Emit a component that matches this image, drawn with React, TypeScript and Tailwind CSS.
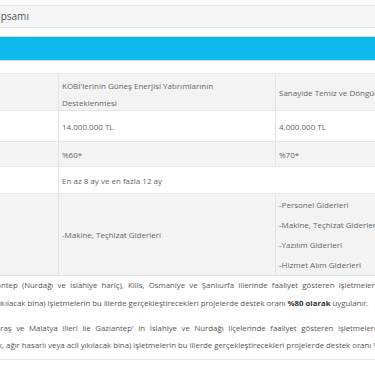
const rows = [
  { h: "h-[37px]", bg: "bg-[#f3f3f3]" },
  { h: "h-[31px]", bg: "bg-white" },
  { h: "h-[25px]", bg: "bg-[#f3f3f3]" },
  { h: "h-[27px]", bg: "bg-white" },
  { h: "h-[82px]", bg: "bg-[#f3f3f3]" },
];

const Cell = ({ children, last }: { children?: React.ReactNode; last?: boolean }) => (
  <div className={`flex items-center px-[3px] ${last ? "" : "border-r border-[#e4e4e4]"}`}>{children}</div>
);

export default function App() {
  return (
    <div className="w-[375px] h-[366px] overflow-hidden bg-white font-['Open_Sans',sans-serif] text-[8px] text-[#666]">
      <div className="pt-[5px]">
        {/* section title, cut on the left */}
        <div className="-ml-[11px] w-[400px] h-[23px] flex items-center border-y border-[#e8e8e8] bg-[#f4f5f7] text-[10px] text-[#555]">
          Kapsamı
        </div>

        <div className="mt-[8px] h-[25px] w-full border-y border-[#b5e9f9] bg-[#0db9ec]" />

        <div className="mt-[12px] border-b border-[#e4e4e4] leading-[17px]">
          <div className={`grid grid-cols-[59px_217px_1fr] border-t border-[#e4e4e4] ${rows[0].h} ${rows[0].bg}`}>
            <Cell />
            <div className="border-r border-[#e4e4e4] px-[3px] pt-[2.5px]">
              KOBİ'lerinin Güneş Enerjisi Yatırımlarının
              <br />
              Desteklenmesi
            </div>
            <Cell last>
              <span className="whitespace-nowrap">Sanayide Temiz ve Döngüsel Ekonomi Uygulamaları</span>
            </Cell>
          </div>

          <div className={`grid grid-cols-[59px_217px_1fr] border-t border-[#e4e4e4] ${rows[1].h} ${rows[1].bg}`}>
            <Cell />
            <Cell>14.000.000 TL</Cell>
            <Cell last>4.000.000 TL</Cell>
          </div>

          <div className={`grid grid-cols-[59px_217px_1fr] border-t border-[#e4e4e4] ${rows[2].h} ${rows[2].bg}`}>
            <Cell />
            <Cell>%60*</Cell>
            <Cell last>%70*</Cell>
          </div>

          <div className={`grid grid-cols-[59px_1fr] border-t border-[#e4e4e4] ${rows[3].h} ${rows[3].bg}`}>
            <Cell />
            <Cell last>En az 8 ay ve en fazla 12 ay</Cell>
          </div>

          <div className={`grid grid-cols-[59px_217px_1fr] border-t border-[#e4e4e4] ${rows[4].h} ${rows[4].bg}`}>
            <Cell />
            <Cell>-Makine, Teçhizat Giderleri</Cell>
            <div className="px-[3px] pt-px leading-[20px] whitespace-nowrap">
              <p>-Personel Giderleri</p>
              <p>-Makine, Teçhizat Giderleri</p>
              <p>-Yazılım Giderleri</p>
              <p>-Hizmet Alım Giderleri</p>
            </div>
          </div>
        </div>

        {/* footnotes, cut on both sides; justified lines get extra word spacing */}
        <div className="mt-[1px] leading-[17.5px] text-[7.8px] text-[#555] whitespace-nowrap">
          <div className="-ml-[19px] [word-spacing:2.2px]">
            Gaziantep (Nurdağı ve İslahiye hariç), Kilis, Osmaniye ve Şanlıurfa illerinde faaliyet gösteren işletmelerden ilgili
          </div>
          <div className="-ml-[5px]">
            yıkılacak bina) işletmelerin bu illerde gerçekleştirecekleri projelerde destek oranı{" "}
            <b className="text-[#333]">%80 olarak</b> uygulanır.
          </div>
          <div className="mt-[7.5px] -ml-[49px] [word-spacing:2.6px]">
            Kahramanmaraş ve Malatya illeri ile Gaziantep' in İslahiye ve Nurdağı ilçelerinde faaliyet gösteren işletmelerden işbirliği
          </div>
          <div className="-ml-[14px]">
            yıkık, ağır hasarlı veya acil yıkılacak bina) işletmelerin bu illerde gerçekleştirecekleri projelerde destek oranı %80
          </div>
        </div>

        <div className="mt-[4px] border-t border-[#e8e8e8]" />
      </div>
    </div>
  );
}
